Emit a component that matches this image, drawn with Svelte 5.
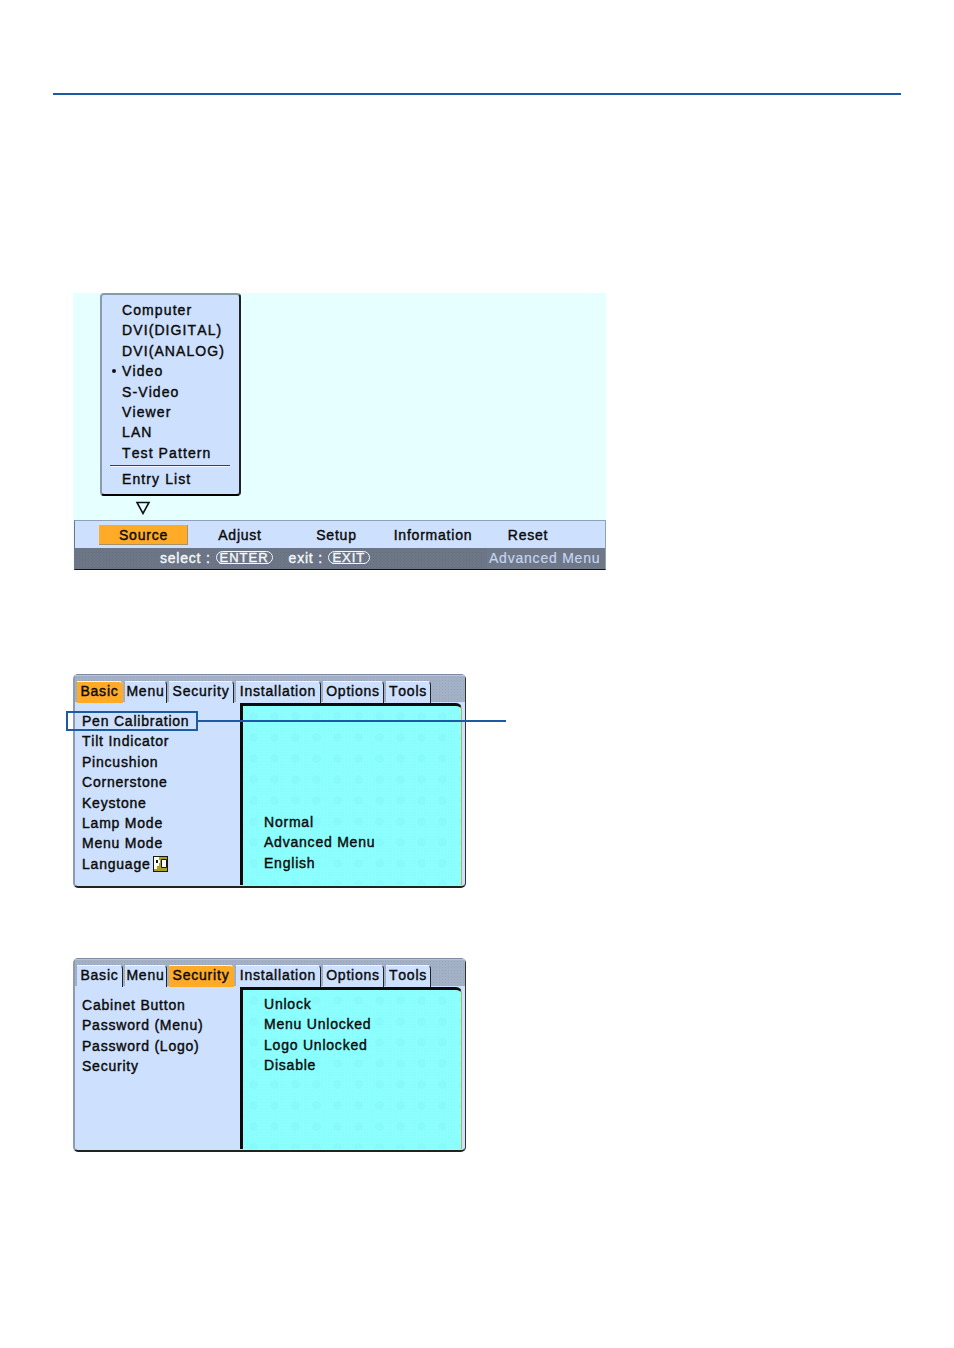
<script>
  const sources = ['Computer', 'DVI(DIGITAL)', 'DVI(ANALOG)', 'Video', 'S-Video', 'Viewer', 'LAN', 'Test Pattern'];
  const mainMenu = [
    { label: 'Source', active: true },
    { label: 'Adjust' },
    { label: 'Setup' },
    { label: 'Information' },
    { label: 'Reset' }
  ];
  const tabs = ['Basic', 'Menu', 'Security', 'Installation', 'Options', 'Tools'];
  const basicLeft = ['Pen Calibration', 'Tilt Indicator', 'Pincushion', 'Cornerstone', 'Keystone', 'Lamp Mode', 'Menu Mode', 'Language'];
  const basicRight = ['', '', '', '', '', 'Normal', 'Advanced Menu', 'English'];
  const secLeft = ['Cabinet Button', 'Password (Menu)', 'Password (Logo)', 'Security'];
  const secRight = ['Unlock', 'Menu Unlocked', 'Logo Unlocked', 'Disable'];
</script>

{#snippet panel(active, left, right, size)}
  <section class="panel {size}">
    <div class="tabs">
      {#each tabs as t}
        <div class="tab" class:active={t === active}>{t}</div>
      {/each}
    </div>
    <div class="body">
      <div class="left">
        {#each left as l}
          <div class="row">
            {l}
            {#if l === 'Language'}
              <svg class="lang" width="15" height="16" viewBox="0 0 15 16" aria-hidden="true">
                <rect x="0.5" y="0.5" width="14" height="15" fill="#ada01e" stroke="#1a1a10" />
                <path d="M1 1h5v3h1v3H6v3H4v3H1z" fill="#fff" />
                <path d="M8.5 3.5h5v8h-5z" fill="#fff" stroke="#1a1a10" stroke-width="1" />
                <path d="M3 4h2v3H3z" fill="#1a1a10" />
              </svg>
            {/if}
          </div>
        {/each}
      </div>
      <div class="right">
        {#each right as r}
          <div class="row">{r}</div>
        {/each}
      </div>
    </div>
    {#if active === 'Basic'}
      <div class="callout-box"></div>
      <div class="callout-line"></div>
    {/if}
  </section>
{/snippet}

<main class="page">
  <div class="rule"></div>

  <section class="scene">
    <div class="popup">
      {#each sources as s}
        <div class="item" class:current={s === 'Video'}>{s}</div>
      {/each}
      <div class="sep"></div>
      <div class="item entry">Entry List</div>
    </div>
    <svg class="arrow" width="16" height="14" viewBox="0 0 16 14" aria-hidden="true">
      <path d="M2 1.5h12L8 12.5z" fill="none" stroke="#111" stroke-width="1.6" />
    </svg>
    <div class="bar">
      <div class="menu">
        {#each mainMenu as m}
          <div class="menu-item" class:active={m.active}>{m.label}</div>
        {/each}
      </div>
      <div class="status">
        <div class="hints">
          <span>select :</span><span class="key enter">ENTER</span>
          <span class="exit-label">exit :</span><span class="key exit">EXIT</span>
        </div>
        <div class="mode">Advanced Menu</div>
      </div>
    </div>
  </section>

  {@render panel('Basic', basicLeft, basicRight, 'tall')}
  {@render panel('Security', secLeft, secRight, 'short')}
</main>

<style>
  :global(body) {
    margin: 0;
    background: #fff;
  }
  .page {
    width: 954px;
    height: 1348px;
    padding-top: 93px;
    box-sizing: border-box;
    font-family: "Liberation Sans", Arial, sans-serif;
    font-size: 14px;
    font-kerning: none;
    letter-spacing: 0.78px;
    color: #0a0a0a;
    -webkit-text-stroke: 0.4px #0a0a0a;
    overflow: hidden;
  }
  .rule {
    height: 2px;
    margin: 0 53px;
    background: #1c5ba3;
  }

  .scene {
    width: 533px;
    height: 277px;
    margin: 198px 0 0 73px;
    background: #e6ffff;
    display: flex;
    flex-direction: column;
  }
  .popup {
    box-sizing: border-box;
    width: 141px;
    height: 204px;
    margin-left: 27px;
    padding: 5px 0 0 20px;
    letter-spacing: 1.1px;
    background: #cde0fd;
    border-left: 2px solid #8a9ab1;
    border-top: 2px solid #8a98ac;
    border-right: 2px solid #222;
    border-bottom: 2px solid #000;
    border-radius: 4px;
  }
  .item {
    position: relative;
    height: 20.4px;
    line-height: 20.4px;
    white-space: nowrap;
  }
  .current::before {
    content: "";
    position: absolute;
    left: -10px;
    top: 8px;
    width: 4px;
    height: 4px;
    border-radius: 50%;
    background: #111;
  }
  .sep {
    width: 120px;
    margin: 2px 0 2px -12px;
    border-top: 1px solid #33425c;
    border-bottom: 1px solid #f2f7ff;
  }
  .entry {
    height: 22px;
  }
  .arrow {
    display: block;
    margin: 5px 0 0 62px;
  }
  .bar {
    margin-top: 5px;
    margin-left: 1px;
    width: 530px;
    height: 48px;
    display: flex;
    flex-direction: column;
    border-bottom: 1px solid #111;
    border-left: 1px solid #6d7686;
    border-top: 1px solid #8fa0b8;
    border-right: 1px solid #8fa0b8;
  }
  .menu {
    height: 27px;
    flex: none;
    background: #cde0fd;
    display: grid;
    grid-template-columns: 89px 104px 89px 104px 86px;
    padding: 4px 0 0 24px;
    box-sizing: border-box;
    text-align: center;
  }
  .menu-item {
    height: 20px;
    line-height: 20px;
  }
  .menu-item.active {
    background: #ffab28;
    box-shadow: inset -1px -1px 0 #a3926a;
  }
  .status {
    flex: 1;
    display: flex;
    background-color: #6c7687;
    background-image: radial-gradient(#666f81 0.7px, transparent 0.8px);
    background-size: 3px 3px;
    color: #f4f7fc;
    -webkit-text-stroke: 0.4px #f4f7fc;
  }
  .hints {
    flex: 1;
    display: flex;
    align-items: center;
    height: 19px;
    padding-left: 85px;
    white-space: nowrap;
  }
  .key {
    margin-left: 5px;
    height: 11px;
    line-height: 11px;
    font-size: 13px;
    letter-spacing: 1px;
    border: 1px solid #f4f7fc;
    border-radius: 7px;
    text-align: center;
    text-decoration: underline;
  }
  .enter {
    width: 55px;
  }
  .exit {
    width: 40px;
  }
  .exit-label {
    margin-left: 16px;
  }
  .mode {
    width: 118px;
    padding-left: 2px;
    box-sizing: border-box;
    line-height: 20px;
    white-space: nowrap;
    color: #c4d5f0;
    -webkit-text-stroke: 0.2px #c4d5f0;
    background: #6f7888;
  }

  .panel {
    position: relative;
    box-sizing: border-box;
    width: 393px;
    margin-left: 73px;
    background: #cde0fd;
    border: 1px solid #7d8ba0;
    border-left: 2px solid #8c9cb4;
    border-right: 1px solid #333;
    border-bottom: 2px solid #222;
    border-radius: 5px;
  }
  .tall {
    height: 214px;
    margin-top: 104px;
  }
  .short {
    height: 194px;
    margin-top: 70px;
  }
  .tabs {
    height: 27px;
    box-sizing: border-box;
    padding: 5px 0 0 2px;
    display: grid;
    grid-template-columns: 46px 42px 65px 85px 61px 45px;
    column-gap: 2px;
    background-color: #a3b1c7;
    background-image: radial-gradient(#98a6bd 0.7px, transparent 0.8px);
    background-size: 3px 3px;
    border-top: 1px solid #b9c5d6;
  }
  .tab {
    height: 22px;
    line-height: 18px;
    text-align: center;
    white-space: nowrap;
    background: #cde0fd;
    border-top-right-radius: 4px;
    border-right: 1px solid #222;
    border-top: 1px solid #eef4ff;
    box-sizing: border-box;
  }
  .tab.active {
    background: #ffab28;
    border-right-color: #ffab28;
  }
  .body {
    display: flex;
    height: calc(100% - 27px);
  }
  .left {
    width: 165px;
    padding: 9px 0 0 7px;
    box-sizing: border-box;
  }
  .right {
    flex: 1;
    margin: 1px 3px 1px 0;
    padding: 4px 0 0 21px;
    box-sizing: border-box;
    background-color: #8cffff;
    background-image:
      radial-gradient(#85f8f9 0.7px, transparent 0.8px),
      radial-gradient(circle, #88fafb 4px, transparent 5px);
    background-size: 3px 3px, 21px 21px;
    border-left: 3px solid #0c0c0c;
    border-top: 3px solid #0c0c0c;
    border-right: 1px solid #c0b25c;
    border-top-right-radius: 6px;
  }
  .row {
    height: 20.4px;
    line-height: 20.4px;
    white-space: nowrap;
    display: flex;
    align-items: center;
    gap: 2px;
  }
  .lang {
    flex: none;
  }
  .callout-box {
    position: absolute;
    left: -9px;
    top: 36px;
    width: 128px;
    height: 16px;
    border: 2px solid #1c5ba3;
  }
  .callout-line {
    position: absolute;
    left: 122px;
    top: 45px;
    width: 309px;
    height: 2px;
    background: #1c5ba3;
  }
</style>
